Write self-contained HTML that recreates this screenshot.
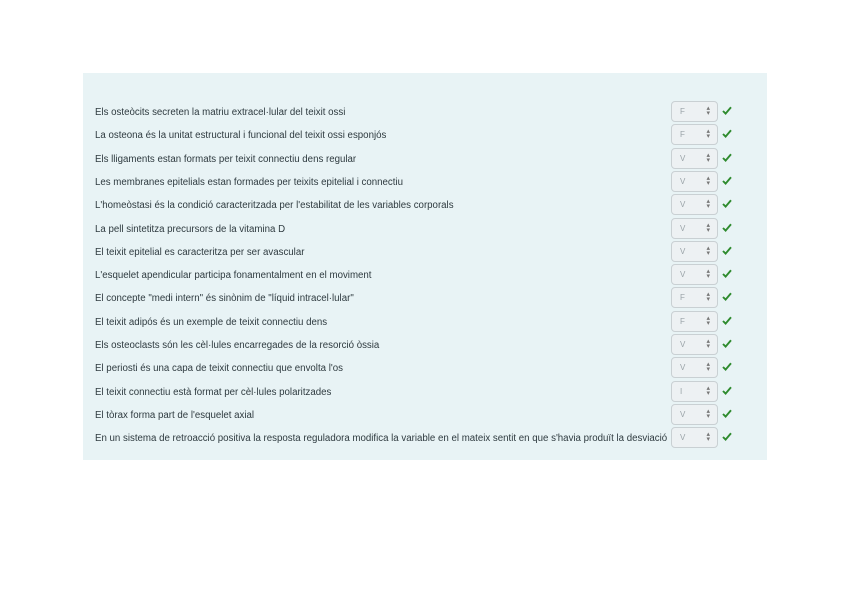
<!DOCTYPE html>
<html><head><meta charset="utf-8"><style>
body{margin:0;background:#fff;width:848px;height:600px;position:relative;font-family:"Liberation Sans",sans-serif;}
.panel{position:absolute;left:83px;top:73px;width:684px;height:387px;background:#e8f3f5;}
.row{position:absolute;left:95px;height:20px;width:660px;}
.row .t{position:absolute;left:0;top:6px;font-size:9.7px;color:#2e3a3f;white-space:nowrap;letter-spacing:0;}
.sel{position:absolute;left:576px;top:0;width:45px;height:19px;border:1px solid #c9d0d3;border-radius:4px;background:#edf1f3;font-size:8px;color:#9aa3a8;}
.sel span{position:absolute;left:8px;top:5px;}
.sel i{position:absolute;right:7px;top:4px;font-style:normal;font-size:7px;color:#777;line-height:5px;}
.chk{position:absolute;left:627px;top:5px;}
</style></head><body>
<div class="panel"></div>
<div id="rows"></div>
<script>
var items=[
["Els osteòcits secreten la matriu extracel·lular del teixit ossi","F"],
["La osteona és la unitat estructural i funcional del teixit ossi esponjós","F"],
["Els lligaments estan formats per teixit connectiu dens regular","V"],
["Les membranes epitelials estan formades per teixits epitelial i connectiu","V"],
["L'homeòstasi és la condició caracteritzada per l'estabilitat de les variables corporals","V"],
["La pell sintetitza precursors de la vitamina D","V"],
["El teixit epitelial es caracteritza per ser avascular","V"],
["L'esquelet apendicular participa fonamentalment en el moviment","V"],
["El concepte \"medi intern\" és sinònim de \"líquid intracel·lular\"","F"],
["El teixit adipós és un exemple de teixit connectiu dens","F"],
["Els osteoclasts són les cèl·lules encarregades de la resorció òssia","V"],
["El periosti és una capa de teixit connectiu que envolta l'os","V"],
["El teixit connectiu està format per cèl·lules polaritzades","I"],
["El tòrax forma part de l'esquelet axial","V"],
["En un sistema de retroacció positiva la resposta reguladora modifica la variable en el mateix sentit en que s'havia produït la desviació","V"]];
var h="";
for(var i=0;i<items.length;i++){
var y=101+i*23.3;
h+='<div class="row" style="top:'+y+'px"><div class="t">'+items[i][0]+'</div><div class="sel"><span>'+items[i][1]+'</span><i>▴<br>▾</i></div><svg class="chk" width="10" height="9" viewBox="0 0 10 9"><path d="M1 5 L3.6 7.6 L9 1.3" fill="none" stroke="#2e8b2e" stroke-width="1.9"/></svg></div>';
}
document.getElementById("rows").innerHTML=h;
</script>
</body></html>
